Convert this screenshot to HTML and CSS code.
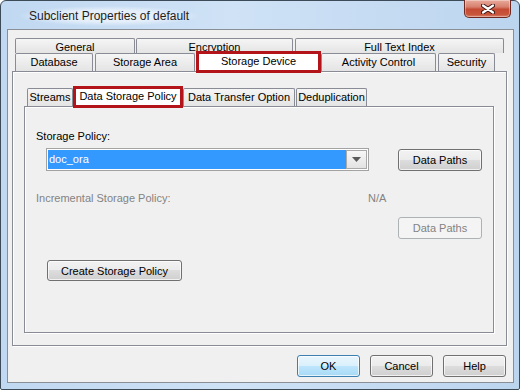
FILE: index.html
```html
<!DOCTYPE html>
<html lang="en">

<head>
    <meta charset="UTF-8">
    <title>Subclient Properties of default</title>
    <link rel="stylesheet" href="styles.css">
</head>

<body>

    <div class="window">
        <div class="titlebar">
            <span class="title">Subclient Properties of default</span>
            <button class="close-btn" aria-label="Close">
                <svg width="14" height="10" viewBox="0 0 14 10">
                    <path d="M2 1.5 L12 8.5 M12 1.5 L2 8.5" stroke="#3b1612" stroke-width="4.2" stroke-linecap="round" fill="none" />
                    <path d="M2 1.5 L12 8.5 M12 1.5 L2 8.5" stroke="#ffffff" stroke-width="2.2" stroke-linecap="round" fill="none" />
                </svg>
            </button>
        </div>

        <div class="client">
            <div class="tab-row row-back">
                <div class="tab t-general">General</div>
                <div class="tab t-encryption">Encryption</div>
                <div class="tab t-fulltext">Full Text Index</div>
            </div>
            <div class="tab-row row-front">
                <div class="tab t-database">Database</div>
                <div class="tab t-area">Storage Area</div>
                <div class="tab selected t-device">Storage Device</div>
                <div class="tab t-activity">Activity Control</div>
                <div class="tab t-security">Security</div>
            </div>

            <div class="panel outer-panel">
                <div class="tab-row inner-tabs">
                    <div class="tab t-streams">Streams</div>
                    <div class="tab selected t-policy">Data Storage Policy</div>
                    <div class="tab t-transfer">Data Transfer Option</div>
                    <div class="tab t-dedup">Deduplication</div>
                </div>

                <div class="panel inner-panel">
                    <div class="field-label">Storage Policy:</div>
                    <div class="policy-row">
                        <div class="combo">
                            <span class="combo-value">doc_ora</span>
                            <span class="combo-arrow">
                                <svg width="9" height="5" viewBox="0 0 9 5">
                                    <path d="M0 0 H9 L4.5 5 Z" fill="#5a5a5a" />
                                </svg>
                            </span>
                        </div>
                        <button class="btn btn-paths">Data Paths</button>
                    </div>

                    <div class="incr-row">
                        <span class="muted incr-label">Incremental Storage Policy:</span>
                        <span class="muted">N/A</span>
                    </div>
                    <div class="paths-row">
                        <button class="btn btn-paths" disabled>Data Paths</button>
                    </div>
                    <button class="btn btn-create">Create Storage Policy</button>
                </div>
            </div>

            <div class="dialog-buttons">
                <button class="btn btn-dialog btn-default">OK</button>
                <button class="btn btn-dialog">Cancel</button>
                <button class="btn btn-dialog">Help</button>
            </div>
        </div>
    </div>

</body>

</html>
```

FILE: styles.css
```css
:root {
    --font-family: "Liberation Sans", Arial, sans-serif;
    --color-text: #000000;
    --color-muted: #838383;
    --color-client: #f0f0f0;
    --color-tab-border: #898c95;
    --color-mark: #b3141a;
}

body {
    margin: 0;
    font-family: var(--font-family);
    font-size: 11px;
    color: var(--color-text);
    background: #ffffff;
}

.window {
    box-sizing: border-box;
    width: 520px;
    height: 390px;
    border: 1px solid #3d4a58;
    border-radius: 6px 6px 2px 2px;
    background: linear-gradient(90deg, #c0d8f1 0%, #cfe2f6 45%, #bcd5ef 100%);
    padding: 0 5px 6px 6px;
    display: flex;
    flex-direction: column;
}

/* title bar */

.titlebar {
    height: 28px;
    display: flex;
    justify-content: space-between;
    align-items: flex-start;
    flex-shrink: 0;
}

.title {
    margin: 5px 0 0 12px;
    font-size: 12px;
    line-height: 16px;
    color: #1e1e1e;
    background: radial-gradient(ellipse at center, rgba(255, 255, 255, 0.55) 40%, rgba(255, 255, 255, 0) 72%);
    padding: 2px 10px;
}

.close-btn {
    width: 47px;
    height: 18px;
    margin: -1px 3px 0 0;
    padding: 0;
    border: 1px solid #6e2a22;
    border-top: none;
    border-radius: 0 0 5px 5px;
    background: linear-gradient(#e9a99b 0%, #d8826f 40%, #c44a33 55%, #c8553c 85%, #d9826a 100%);
    box-shadow: inset 0 0 0 1px rgba(255, 255, 255, 0.35);
    display: flex;
    align-items: center;
    justify-content: center;
}

/* client area */

.client {
    flex: 1;
    box-sizing: border-box;
    background: var(--color-client);
    border: 1px solid #8a8f96;
    padding: 8px 6px 5px 4px;
    display: flex;
    flex-direction: column;
}

/* tabs */

.tab-row {
    display: flex;
    flex-shrink: 0;
}

.row-back {
    height: 15px;
}

.row-front,
.inner-tabs {
    height: 18px;
}

.tab {
    box-sizing: border-box;
    border: 1px solid var(--color-tab-border);
    border-bottom: none;
    border-radius: 2px 2px 0 0;
    background: linear-gradient(#f5f5f5, #e4e4e4);
    display: flex;
    align-items: center;
    justify-content: center;
    white-space: nowrap;
    line-height: 13px;
}

.row-back .tab {
    padding-top: 2px;
}

.tab.selected {
    height: 22px;
    margin-top: -2px;
    margin-bottom: -2px;
    border: 3px solid var(--color-mark);
    border-radius: 0;
    background: #ffffff;
    padding-bottom: 2px;
    position: relative;
    z-index: 2;
}

.t-general { margin-left: 3px; width: 120px; }
.t-encryption { margin-left: 1px; width: 157px; }
.t-fulltext { margin-left: 2px; width: 209px; }

.t-database { margin-left: 3px; width: 78px; }
.t-area { margin-left: 2px; width: 100px; }
.t-device { margin-left: 1px; width: 125px; }
.t-activity { width: 115px; }
.t-security { margin-left: 2px; width: 57px; }

.t-streams { margin-left: 3px; width: 46px; }
.t-policy { width: 110px; }
.t-transfer { width: 112px; }
.t-dedup { margin-left: 1px; width: 71px; }

/* panels */

.panel {
    box-sizing: border-box;
    border: 1px solid var(--color-tab-border);
    background: var(--color-client);
    box-shadow: inset 1px 1px 0 #ffffff, 1px 1px 0 #ffffff;
}

.outer-panel {
    height: 275px;
    flex-shrink: 0;
    padding: 16px 12px 12px 11px;
    display: flex;
    flex-direction: column;
}

.inner-panel {
    flex: 1;
    padding: 22px 0 0 11px;
    display: flex;
    flex-direction: column;
    align-items: flex-start;
}

.field-label {
    line-height: 14px;
}

.policy-row {
    display: flex;
    align-items: center;
    margin: 5px 0 0 10px;
    height: 23px;
}

.combo {
    box-sizing: border-box;
    width: 323px;
    height: 23px;
    border: 1px solid #a3a3a3;
    background: #ffffff;
    padding: 1px;
    display: flex;
}

.combo-value {
    flex: 1;
    background: #3399ff;
    color: #ffffff;
    line-height: 19px;
    padding-left: 1px;
}

.combo-arrow {
    box-sizing: border-box;
    width: 21px;
    border: 1px solid #a9a9a9;
    background: linear-gradient(#f7f7f7, #e3e3e3);
    display: flex;
    align-items: center;
    justify-content: center;
}

.btn-paths {
    width: 84px;
    margin-left: 29px;
}

.incr-row {
    display: flex;
    line-height: 14px;
    margin-top: 20px;
}

.incr-label {
    width: 332px;
}

.muted {
    color: var(--color-muted);
}

.paths-row {
    margin-top: 12px;
    padding-left: 333px;
}

/* buttons */

.btn {
    box-sizing: border-box;
    height: 22px;
    padding: 0;
    font-family: var(--font-family);
    font-size: 11px;
    color: var(--color-text);
    border: 1px solid #707070;
    border-radius: 3px;
    background: linear-gradient(#f2f2f2 0%, #ebebeb 50%, #dddddd 50%, #cfcfcf 100%);
    box-shadow: inset 0 0 0 1px rgba(255, 255, 255, 0.7);
}

.btn:disabled {
    color: var(--color-muted);
    border-color: #adb2b5;
    background: #f4f4f4;
    box-shadow: none;
}

.btn-create {
    width: 135px;
    height: 21px;
    margin: 21px 0 0 11px;
}

.dialog-buttons {
    display: flex;
    justify-content: flex-end;
    gap: 10px;
    margin-top: 9px;
    padding-right: 1px;
}

.btn-dialog {
    width: 63px;
}

.btn-default {
    border-color: #3c7fb1;
    background: linear-gradient(#eaf6fd 0%, #d9f0fc 50%, #bee6fd 50%, #a7d9f5 100%);
}
```
